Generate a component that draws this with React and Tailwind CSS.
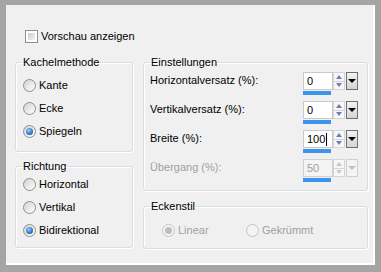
import React from 'react';

const Radio = ({ checked, disabled }) => (
  <div
    className={`w-[13px] h-[13px] rounded-full border flex items-center justify-center shrink-0 ${
      disabled
        ? 'border-[#c4c4c4] bg-[#f4f4f4]'
        : 'border-[#8e8f8f] bg-linear-to-br from-[#d2d2d2] to-white'
    }`}
  >
    {checked && (
      <div
        className={`w-[7px] h-[7px] rounded-full ${
          disabled
            ? 'bg-[#bdbdbd]'
            : 'bg-[radial-gradient(circle_at_40%_35%,#8fd0ff,#1f66b3_70%,#0d3f7a)]'
        }`}
      />
    )}
  </div>
);

const RadioRow = ({ label, checked, disabled }) => (
  <div className="flex items-center h-[23px] gap-[3px]">
    <Radio checked={checked} disabled={disabled} />
    <span className={disabled ? 'text-[#a0a0a0]' : 'text-black'}>{label}</span>
  </div>
);

const Group = ({ title, className, children }) => (
  <fieldset
    className={`border border-[#d5dfe5] rounded-[3px] shadow-[inset_1px_1px_0_#fff,1px_1px_0_#fff] ${className}`}
  >
    <legend className="ml-[6px] px-[1px] leading-[13px]">{title}</legend>
    {children}
  </fieldset>
);

const Spin = ({ value, disabled, cursor }) => (
  <div className="flex flex-col">
    <div className="flex h-[18px]">
      <div
        className={`w-[30px] border flex items-center pl-[3px] ${
          disabled ? 'border-[#d0d0d0] bg-[#f4f4f4] text-[#a0a0a0]' : 'border-[#c9c9c9] bg-white text-black'
        }`}
      >
        {value}
        {cursor && <span className="w-px h-[13px] bg-black ml-px" />}
      </div>
      <div className="w-[12px] flex flex-col">
        <div className="flex-1 border border-[#d5d5d5] bg-[#f7f7f7] flex items-center justify-center">
          <div
            className={`w-0 h-0 border-l-[3px] border-r-[3px] border-b-[4px] border-l-transparent border-r-transparent ${
              disabled ? 'border-b-[#c8c8c8]' : 'border-b-[#6a7fb0]'
            }`}
          />
        </div>
        <div className="flex-1 border border-t-0 border-[#d5d5d5] bg-[#f7f7f7] flex items-center justify-center">
          <div
            className={`w-0 h-0 border-l-[3px] border-r-[3px] border-t-[4px] border-l-transparent border-r-transparent ${
              disabled ? 'border-t-[#c8c8c8]' : 'border-t-[#6a7fb0]'
            }`}
          />
        </div>
      </div>
      <div
        className={`w-[12px] ml-px border flex items-center justify-center ${
          disabled ? 'border-[#d0d0d0] bg-[#f4f4f4]' : 'border-[#707070] bg-linear-to-b from-[#f2f2f2] to-[#d4d4d4]'
        }`}
      >
        <div
          className={`w-0 h-0 border-l-[4px] border-r-[4px] border-t-[4px] border-l-transparent border-r-transparent ${
            disabled ? 'border-t-[#c0c0c0]' : 'border-t-black'
          }`}
        />
      </div>
    </div>
    <div className="w-[28px] h-[4px] bg-[#3d94ee] mt-[1px]" />
  </div>
);

const SpinRow = ({ label, value, disabled, cursor }) => (
  <div className="flex items-start justify-between h-[29px]">
    <span className={`mt-[2px] ${disabled ? 'text-[#a0a0a0]' : 'text-black'}`}>{label}</span>
    <Spin value={value} disabled={disabled} cursor={cursor} />
  </div>
);

export default function App() {
  return (
    <div
      className="w-[381px] h-[272px] bg-[#a5a5a5] pl-[6px] pt-[5px] pr-[6px] pb-[7px] text-[11px] leading-[13px] text-black"
      style={{ fontFamily: '"Liberation Sans", Arial, sans-serif' }}
    >
      <div className="w-full h-full bg-[#f0f0f0] border-r-2 border-b-2 border-white pl-[9px] pt-[25px]">
        {/* Vorschau */}
        <div className="flex items-center gap-[3px] ml-[10px] h-[13px]">
          <div className="w-[13px] h-[13px] border border-[#8e8f8f] bg-white p-[2px]">
            <div className="w-full h-full bg-linear-to-br from-[#cbcbcb] to-[#f4f4f4]" />
          </div>
          <span>Vorschau anzeigen</span>
        </div>

        <div className="flex gap-[10px] mt-[13px]">
          {/* Left column */}
          <div className="w-[118px] flex flex-col">
            <Group title="Kachelmethode" className="h-[96px]">
              <div className="pl-[7px] pt-[5px]">
                <RadioRow label="Kante" />
                <RadioRow label="Ecke" />
                <RadioRow label="Spiegeln" checked />
              </div>
            </Group>
            <Group title="Richtung" className="h-[88px] mt-[8px]">
              <div className="pl-[7px]">
                <RadioRow label="Horizontal" />
                <RadioRow label="Vertikal" />
                <RadioRow label="Bidirektional" checked />
              </div>
            </Group>
          </div>

          {/* Right column */}
          <div className="w-[225px] flex flex-col">
            <Group title="Einstellungen" className="h-[135px]">
              <div className="pl-[6px] pr-[9px] pt-[3px]">
                <SpinRow label="Horizontalversatz (%):" value="0" />
                <SpinRow label="Vertikalversatz (%):" value="0" />
                <SpinRow label="Breite (%):" value="100" cursor />
                <SpinRow label="Übergang (%):" value="50" disabled />
              </div>
            </Group>
            <Group title="Eckenstil" className="h-[49px] mt-[9px]">
              <div className="flex pl-[18px] pt-[6px]">
                <div className="w-[84px]">
                  <RadioRow label="Linear" checked disabled />
                </div>
                <RadioRow label="Gekrümmt" disabled />
              </div>
            </Group>
          </div>
        </div>
      </div>
    </div>
  );
}
